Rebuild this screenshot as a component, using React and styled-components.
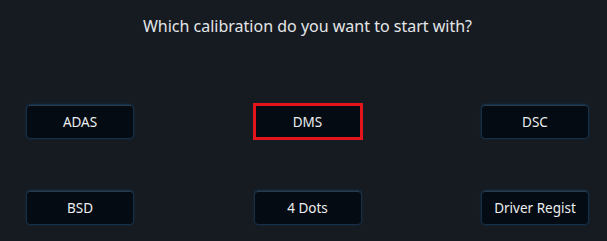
import React from "react";
import styled, { createGlobalStyle } from "styled-components";

const GlobalStyle = createGlobalStyle`
  html, body {
    margin: 0;
    padding: 0;
    background: #161b21;
  }
  body {
    font-family: "Noto Sans", "Open Sans", sans-serif;
  }
`;

const options = ["ADAS", "DMS", "DSC", "BSD", "4 Dots", "Driver Regist"];

const App = () => {
  const selected = "DMS";
  return (
    <Screen>
      <GlobalStyle />
      <Title>Which calibration do you want to start with?</Title>
      <Grid>
        {options.map((name) => (
          <OptionButton key={name} active={name === selected ? 1 : 0}>
            {name}
          </OptionButton>
        ))}
      </Grid>
    </Screen>
  );
};

const Screen = styled.div`
  width: 607px;
  height: 241px;
  background: #161b21;
  overflow: hidden;
  box-sizing: border-box;
  padding-top: 16px;
`;

const Title = styled.div`
  text-align: center;
  color: #e4e6e8;
  font-size: 16px;
  line-height: 20px;
  padding-left: 8px;
`;

const Grid = styled.div`
  display: grid;
  grid-template-columns: repeat(3, 108px);
  justify-content: space-between;
  row-gap: 51px;
  padding: 0 18px 0 26px;
  margin-top: 68px;
`;

const OptionButton = styled.div`
  height: 35px;
  box-sizing: border-box;
  display: flex;
  align-items: center;
  justify-content: center;
  color: #eceef0;
  font-size: 13.5px;
  background: #050b12;
  border: 1px solid #163048;
  border-radius: ${(p) => (p.active ? "0" : "4px")};
  box-shadow: inset 0 1px 0 rgba(120, 150, 175, 0.35),
    0 0 3px rgba(20, 60, 95, 0.45);
  outline: ${(p) => (p.active ? "3px solid #e3151b" : "none")};
  outline-offset: -2px;
`;

export default App;
